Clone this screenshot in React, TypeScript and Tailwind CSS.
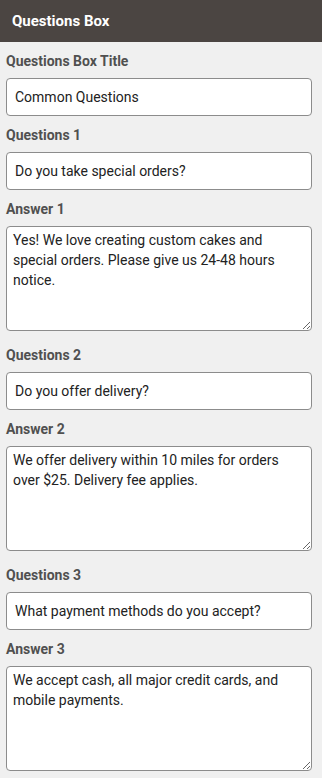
import React from "react";

const font = { fontFamily: "Roboto, 'Liberation Sans', sans-serif" };

function Label({ children }: { children: React.ReactNode }) {
  return (
    <div className="pt-[9px] pb-[7px] text-[14px] leading-[20px] font-bold text-[#505050]">
      {children}
    </div>
  );
}

function Input({ value }: { value: string }) {
  return (
    <input
      readOnly
      value={value}
      className="block w-full h-[38px] bg-white border border-[#8c8c8c] rounded-[4px] px-2 text-[14px] text-[#222] outline-none"
      style={font}
    />
  );
}

function Area({ value }: { value: string }) {
  return (
    <textarea
      readOnly
      value={value}
      className="block w-full h-[105px] mb-[5px] bg-white border border-[#8c8c8c] rounded-[4px] pl-[6px] pr-[6px] pt-[3px] text-[14px] leading-[20px] text-[#222] outline-none"
      style={font}
    />
  );
}

export default function App() {
  const qa = [
    {
      q: "Do you take special orders?",
      a: "Yes! We love creating custom cakes and special orders. Please give us 24-48 hours notice.",
    },
    {
      q: "Do you offer delivery?",
      a: "We offer delivery within 10 miles for orders over $25. Delivery fee applies.",
    },
    {
      q: "What payment methods do you accept?",
      a: "We accept cash, all major credit cards, and mobile payments.",
    },
  ];
  return (
    <div className="w-[322px] min-h-[778px] bg-[#f0f0f0]" style={font}>
      <div className="h-[42px] bg-[#4b4542] flex items-center px-3 text-white font-bold text-[15px]">
        Questions Box
      </div>
      <div className="pl-[6px] pr-[10px]">
        <Label>Questions Box Title</Label>
        <Input value="Common Questions" />
        {qa.map((item, i) => (
          <React.Fragment key={i}>
            <Label>Questions {i + 1}</Label>
            <Input value={item.q} />
            <Label>Answer {i + 1}</Label>
            <Area value={item.a} />
          </React.Fragment>
        ))}
      </div>
    </div>
  );
}
